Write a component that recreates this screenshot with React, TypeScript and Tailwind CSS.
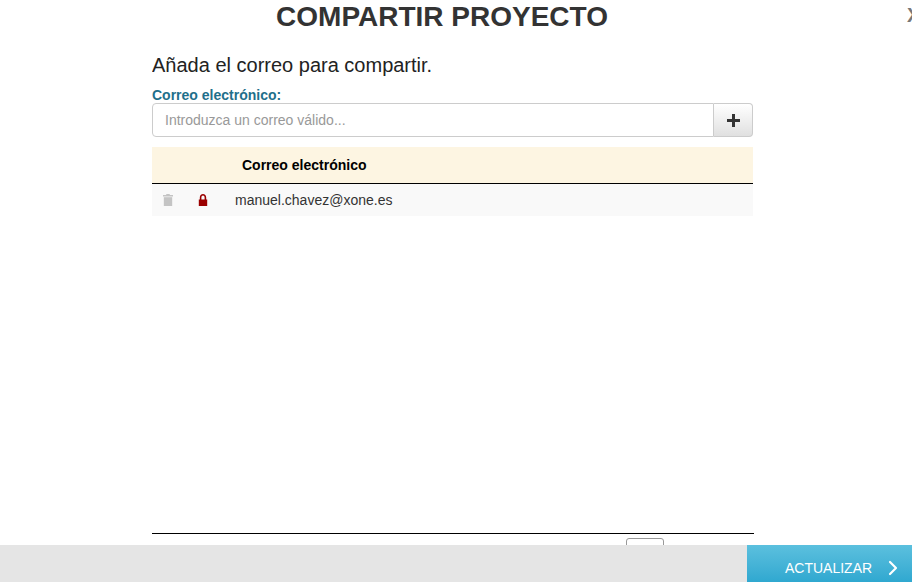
import { ChevronRight } from 'lucide-react'

const font = { fontFamily: '"Liberation Sans", Arial, sans-serif' }

function TrashIcon() {
  return (
    <svg viewBox="0 0 12 12" className="w-3 h-3 text-[#c4c4c4]" fill="currentColor">
      <path d="M4.500 0h3l.5 1h3v1.400H1V1h3z" />
      <path d="M1.800 3.200h8.400V12H1.800z" />
    </svg>
  )
}

function LockIcon() {
  return (
    <svg viewBox="0 0 12 12" className="w-3 h-3 text-[#9b0000]" fill="currentColor">
      <path d="M2.800 5.500V3.500C2.800 1.400 4.200 0 6 0s3.200 1.400 3.200 3.500v2h1V12H1.800V5.500zm1.600 0h3.200V3.500C7.600 2.300 6.900 1.500 6 1.500s-1.600.8-1.600 2z" fillRule="evenodd" />
    </svg>
  )
}

export default function App() {
  return (
    <div className="relative flex flex-col h-screen overflow-hidden bg-white" style={font}>
      <h1 className="h-[33px] text-center text-[28px] leading-[33px] font-bold text-[#333] pr-[28px]">COMPARTIR PROYECTO</h1>
      <button className="absolute left-[907px] top-[4px] text-[20px] leading-[22px] font-bold text-[#777]">X</button>

      <main className="flex-1 min-h-0 flex flex-col w-[602px] ml-[152px] overflow-hidden">
        <p className="mt-[19px] text-[20px] leading-[26px] text-[#222]">Añada el correo para compartir.</p>
        <label className="mt-[9px] text-[14px] leading-[16px] font-bold text-[#1f6f8b]">Correo electrónico:</label>
        <div className="flex h-[34px] w-[601px]">
          <input
            placeholder="Introduzca un correo válido..."
            className="flex-1 min-w-0 h-full px-3 text-[14px] text-[#333] placeholder:text-[#999] border border-[#ccc] rounded-l-[4px] outline-none"
            style={font}
          />
          <button className="w-[39px] h-full flex items-center justify-center border border-l-0 border-[#ccc] rounded-r-[4px] bg-gradient-to-b from-white to-[#e0e0e0] text-[#333]">
            <svg viewBox="0 0 13 13" className="w-[13px] h-[13px]" fill="currentColor">
              <path d="M5 0h3v5h5v3H8v5H5V8H0V5h5z" />
            </svg>
          </button>
        </div>

        <div className="mt-[10px] w-[601px] h-[37px] flex items-center pl-[90px] bg-[#fdf5e2] border-b border-black text-[14px] font-bold text-black">
          Correo electrónico
        </div>
        <div className="w-[601px] h-[32px] flex items-center bg-[#f9f9f9] text-[14px] text-[#333]">
          <span className="w-[10px]" />
          <TrashIcon />
          <span className="w-[23px]" />
          <LockIcon />
          <span className="ml-[26px]">manuel.chavez@xone.es</span>
        </div>

        <div className="flex-1" />
        <div className="relative w-[602px] h-[12px] border-t border-black shrink-0">
          <div className="absolute left-[474px] top-[4px] w-[38px] h-[20px] border border-[#999] rounded-[3px] bg-white" />
        </div>
      </main>

      <footer className="relative shrink-0 h-[37px] flex justify-end bg-[#e5e5e5]">
        <button className="w-[165px] h-full flex items-center pl-[38px] pt-[9px] bg-gradient-to-b from-[#5bc0de] to-[#2fa8d0] text-white text-[14px]">
          ACTUALIZAR
          <ChevronRight className="ml-[9px] w-[24px] h-[24px]" strokeWidth={2.2} />
        </button>
      </footer>
    </div>
  )
}
